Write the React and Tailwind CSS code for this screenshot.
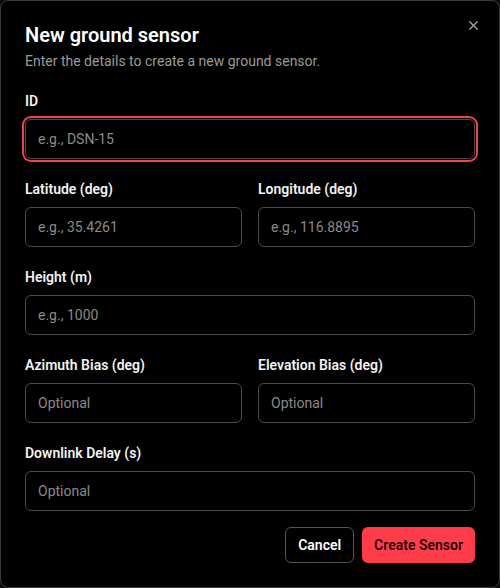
import React from "react";
import { X } from "lucide-react";

const Field = ({ label, placeholder, focused }) => (
  <div className="flex flex-col gap-2">
    <label className="text-sm leading-5 font-semibold text-[#f2f2f2]">{label}</label>
    <input
      placeholder={placeholder}
      className={
        focused
          ? "h-10 w-full rounded-md border border-[#4a4a4a] bg-black px-3 text-sm text-white placeholder:text-[#8a8a8a] outline-none ring-2 ring-[#f0404c] ring-offset-1 ring-offset-black"
          : "h-10 w-full rounded-md border border-[#4a4a4a] bg-black px-3 text-sm text-white placeholder:text-[#8a8a8a] outline-none"
      }
    />
  </div>
);

export default function App() {
  return (
    <div className="h-[588px] w-[500px] bg-[#0b0b0b] font-['Roboto',sans-serif]">
      <div className="relative flex h-full w-full flex-col rounded-lg border border-[#3a3a3a] bg-black p-6">
        <button className="absolute right-[18px] top-[17px] text-[#a8a8a8]">
          <X size={15} strokeWidth={2} />
        </button>

        {/* header */}
        <div className="flex flex-col gap-1.5">
          <h2 className="text-xl leading-5 font-semibold text-white">New ground sensor</h2>
          <p className="text-sm leading-5 text-[#9a9a9a]">
            Enter the details to create a new ground sensor.
          </p>
        </div>

        {/* form */}
        <div className="mt-5 flex flex-col gap-5">
          <Field label="ID" placeholder="e.g., DSN-15" focused />
          <div className="grid grid-cols-2 gap-4">
            <Field label="Latitude (deg)" placeholder="e.g., 35.4261" />
            <Field label="Longitude (deg)" placeholder="e.g., 116.8895" />
          </div>
          <Field label="Height (m)" placeholder="e.g., 1000" />
          <div className="grid grid-cols-2 gap-4">
            <Field label="Azimuth Bias (deg)" placeholder="Optional" />
            <Field label="Elevation Bias (deg)" placeholder="Optional" />
          </div>
          <Field label="Downlink Delay (s)" placeholder="Optional" />
        </div>

        {/* footer */}
        <div className="mt-4 flex justify-end gap-2">
          <button className="h-9 rounded-md border border-[#555] bg-black px-3 text-sm font-semibold text-white">
            Cancel
          </button>
          <button className="h-9 rounded-md bg-[#ff3d4a] px-3 text-sm font-semibold text-[#1f0508]">
            Create Sensor
          </button>
        </div>
      </div>
    </div>
  );
}
